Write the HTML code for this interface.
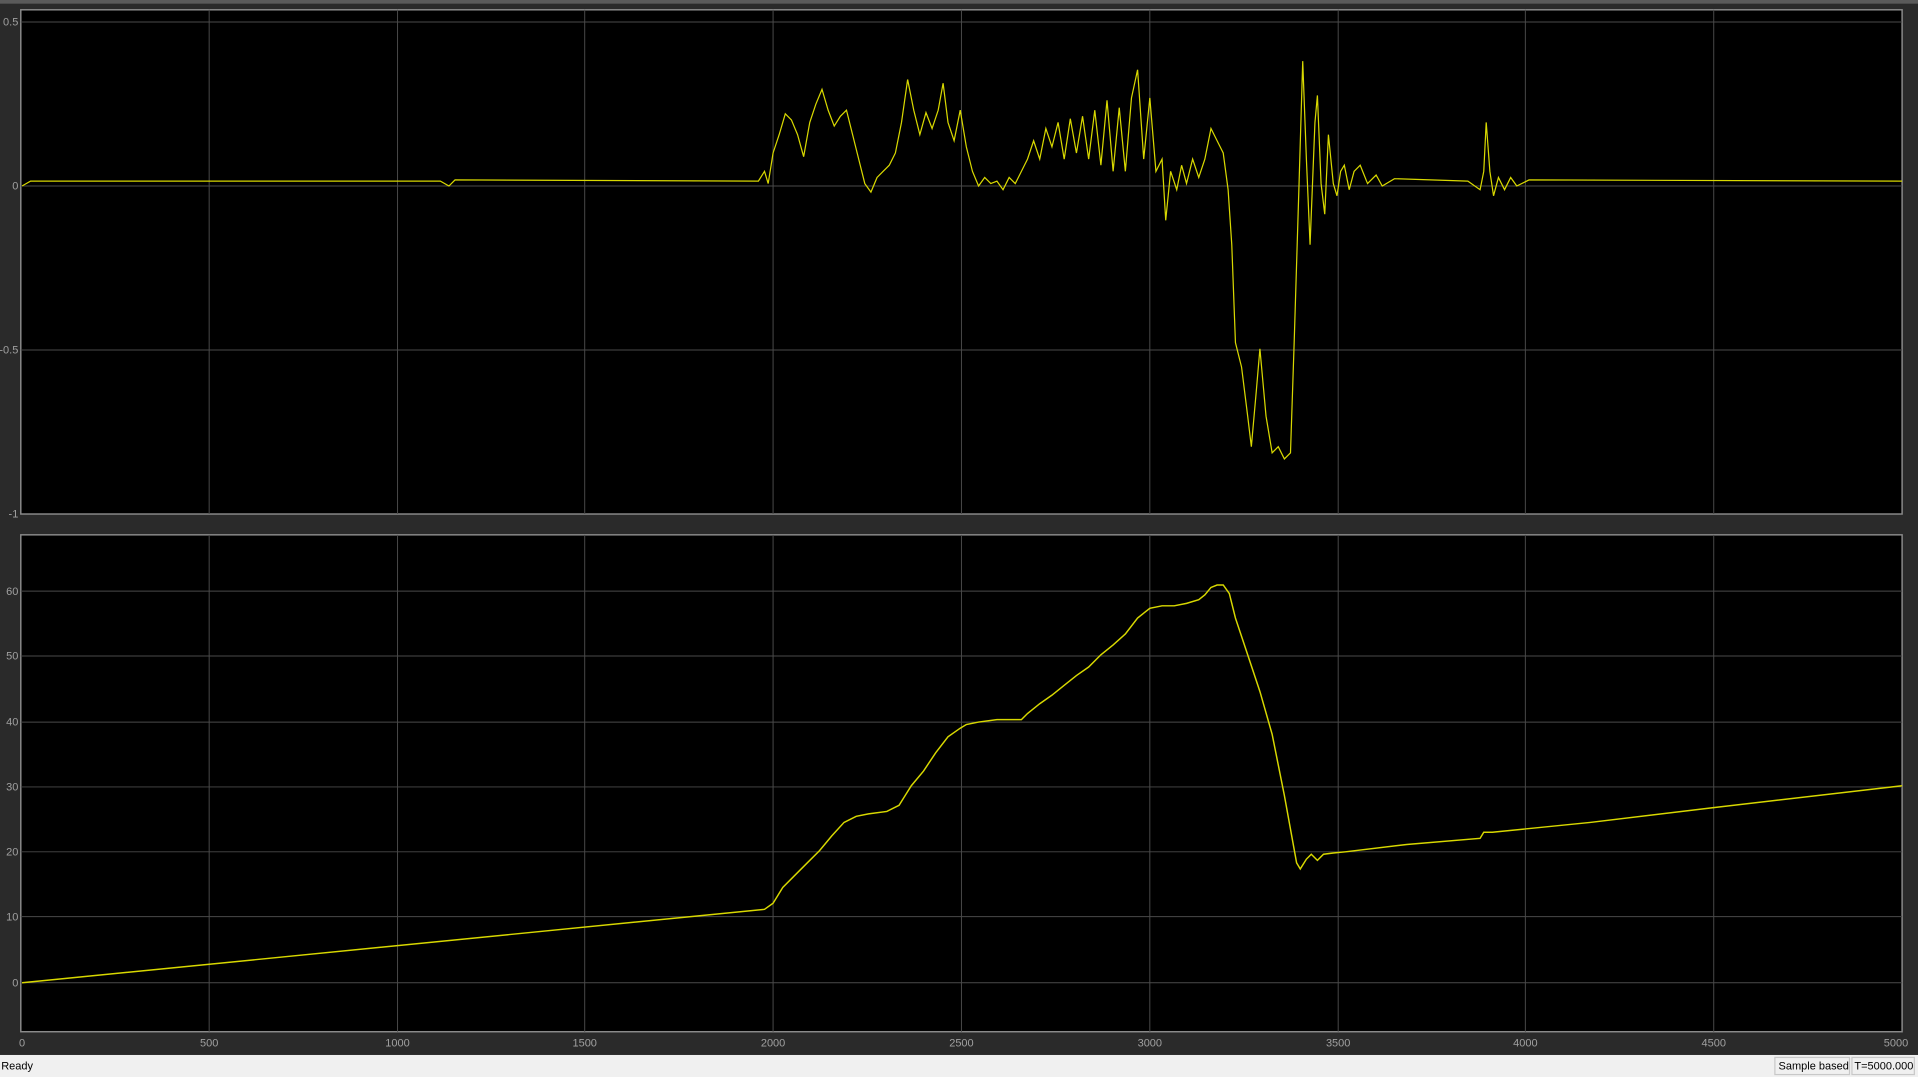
<!DOCTYPE html>
<html><head><style>html,body{margin:0;padding:0;background:#2a2a2a;overflow:hidden}svg{display:block}</style></head><body>
<svg width="1918" height="1077" viewBox="0 0 1568 880" preserveAspectRatio="none" font-family="Liberation Sans, sans-serif">
<rect width="1568" height="880" fill="#2a2a2a"/>
<rect x="0" y="0" width="1568" height="3" fill="#5a5a5a"/>
<rect x="17" y="8" width="1538" height="412" fill="#000" stroke="#8a8a8a" stroke-width="1.2"/>
<rect x="17" y="437" width="1538" height="406" fill="#000" stroke="#8a8a8a" stroke-width="1.2"/>
<g stroke="#4a4a4a" stroke-width="0.8">
<path d="M171 8V420M325 8V420M478 8V420M632 8V420M786 8V420M940 8V420M1094 8V420M1247 8V420M1401 8V420"/>
<path d="M17 18H1555M17 152H1555M17 286H1555"/>
<path d="M171 437V843M325 437V843M478 437V843M632 437V843M786 437V843M940 437V843M1094 437V843M1247 437V843M1401 437V843"/>
<path d="M17 483H1555M17 536H1555M17 590H1555M17 643H1555M17 696H1555M17 749H1555M17 803H1555"/>
</g>
<g fill="#a0a0a0" font-size="9" text-anchor="end">
<text x="15" y="21">0.5</text><text x="15" y="155">0</text><text x="15" y="289">-0.5</text><text x="15" y="423">-1</text>
<text x="15" y="486">60</text><text x="15" y="539">50</text><text x="15" y="593">40</text><text x="15" y="646">30</text><text x="15" y="699">20</text><text x="15" y="752">10</text><text x="15" y="806">0</text>
</g>
<g fill="#a0a0a0" font-size="9" text-anchor="middle">
<text x="18" y="855">0</text><text x="171" y="855">500</text><text x="325" y="855">1000</text><text x="478" y="855">1500</text><text x="632" y="855">2000</text><text x="786" y="855">2500</text><text x="940" y="855">3000</text><text x="1094" y="855">3500</text><text x="1247" y="855">4000</text><text x="1401" y="855">4500</text><text x="1550" y="855">5000</text>
</g>
<polyline fill="none" stroke="#d8d800" stroke-width="1" points="18,152 25,148 360,148 367,152 372,147 620,148 625,140 628,150 632,125 637,110 642,93 647,98 652,110 657,128 662,100 667,85 672,73 677,90 682,103 687,95 692,90 697,110 702,130 707,150 712,157 717,145 722,140 727,135 732,125 737,100 742,65 747,90 752,110 757,92 762,105 767,90 771,68 775,100 780,115 785,90 790,120 795,140 800,152 805,145 810,150 815,148 820,155 825,145 830,150 835,140 840,130 845,115 850,130 855,105 860,120 865,100 870,130 875,97 880,125 885,95 890,130 895,90 900,135 905,82 910,140 915,88 920,140 925,80 930,57 935,130 940,80 945,140 950,130 953,180 957,140 962,155 966,135 970,150 975,130 980,145 985,130 990,105 995,115 1000,125 1004,155 1007,200 1010,280 1015,300 1020,340 1023,365 1027,320 1030,285 1035,340 1040,370 1045,365 1050,375 1055,370 1058,280 1062,150 1065,50 1068,130 1071,200 1075,100 1077,78 1080,150 1083,175 1086,110 1090,150 1093,160 1096,140 1099,135 1103,155 1107,140 1112,135 1118,150 1125,143 1130,152 1140,146 1200,148 1210,155 1213,140 1215,100 1218,140 1221,160 1225,145 1230,155 1235,145 1240,152 1250,147 1555,148"/>
<polyline fill="none" stroke="#d8d800" stroke-width="1.2" points="18,803 625,743 632,738 640,725 650,715 660,705 670,695 680,683 690,672 700,667 710,665 725,663 735,658 740,650 745,642 755,630 765,615 775,602 785,595 790,592 800,590 815,588 835,588 840,583 850,575 860,568 870,560 880,552 890,545 900,535 910,527 920,518 930,505 940,497 950,495 960,495 970,493 980,490 985,486 990,480 995,478 1000,478 1005,485 1010,505 1020,535 1030,565 1040,600 1050,650 1060,705 1063,710 1068,702 1072,698 1077,703 1082,698 1090,697 1100,696 1150,690 1210,685 1213,680 1220,680 1300,672 1400,660 1555,642"/>
<rect x="0" y="862" width="1568" height="18" fill="#f0f0f0"/>
<text x="1" y="874" font-size="9" fill="#000">Ready</text>
<rect x="1451" y="864" width="61" height="14" fill="#f0f0f0" stroke="#c8c8c8"/>
<text x="1454" y="874" font-size="9" fill="#000">Sample based</text>
<rect x="1514" y="864" width="51" height="14" fill="#f0f0f0" stroke="#c8c8c8"/>
<text x="1516" y="874" font-size="9" fill="#000">T=5000.000</text>
</svg>
</body></html>
